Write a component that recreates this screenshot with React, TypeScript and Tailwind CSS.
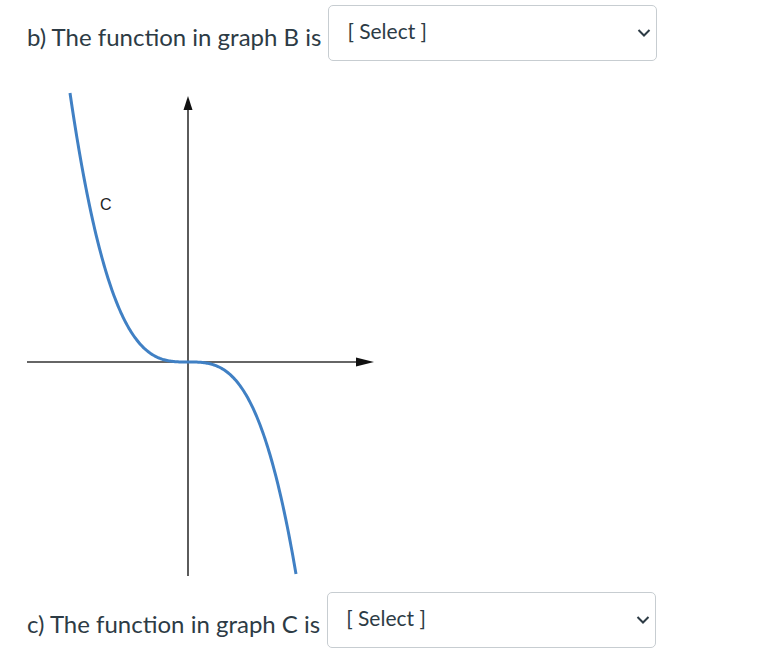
import React from 'react';

const ink = '#2d3b45';

const SelectBox: React.FC = () => (
  <div className="relative w-[329px] h-[56px] border border-[#c7cdd1] rounded-[5px] bg-white">
    <span className="absolute left-[18px] top-[12px] text-[21px] leading-[25px] text-[#2d3b45]">[ Select ]</span>
    <svg className="absolute right-[5px] top-[22px]" width="14" height="10" viewBox="0 0 14 10">
      <polyline points="1.5,2 7,7.5 12.5,2" fill="none" stroke={ink} strokeWidth="2" />
    </svg>
  </div>
);

const Row: React.FC<{ label: string }> = ({ label }) => (
  <div className="flex items-start">
    <span className="mt-[17px] text-[24px] leading-[29px] text-[#2d3b45] whitespace-nowrap">{label}</span>
    <div className="ml-[7px]">
      <SelectBox />
    </div>
  </div>
);

// y = -x^3 shape around the origin (188, 362); svg y grows downward
const curvePoints = () => {
  const pts: string[] = [];
  for (let x = -118; x <= 108; x += 1) {
    const k = x < 0 ? 1.637e-4 : 1.683e-4;
    pts.push(`${188 + x},${362 + k * x * x * x}`);
  }
  return pts.join(' ');
};

const Graph: React.FC = () => (
  <svg width="360" height="488" viewBox="20 90 360 488" className="block">
    <line x1="188" y1="106" x2="188" y2="576" stroke="#333" strokeWidth="1.6" />
    <polygon points="188,96 183.5,110 192.5,110" fill="#111" />
    <line x1="27" y1="362" x2="360" y2="362" stroke="#333" strokeWidth="1.6" />
    <polygon points="374,362 356,357.5 356,366.5" fill="#111" />
    <polyline points={curvePoints()} fill="none" stroke="#4080c4" strokeWidth="3" />
    <text x="100" y="210" fontSize="16" fontFamily="'Liberation Sans', Arial, sans-serif" fill="#222">C</text>
  </svg>
);

export default function App() {
  return (
    <div className="bg-white w-[759px] h-[660px] pl-[27px] pt-[5px]" style={{ fontFamily: 'Lato, "Open Sans", sans-serif' }}>
      <Row label="b) The function in graph B is" />
      <div className="mt-[29px] -ml-[7px]">
        <Graph />
      </div>
      <div className="mt-[14px]">
        <Row label="c) The function in graph C is" />
      </div>
    </div>
  );
}
